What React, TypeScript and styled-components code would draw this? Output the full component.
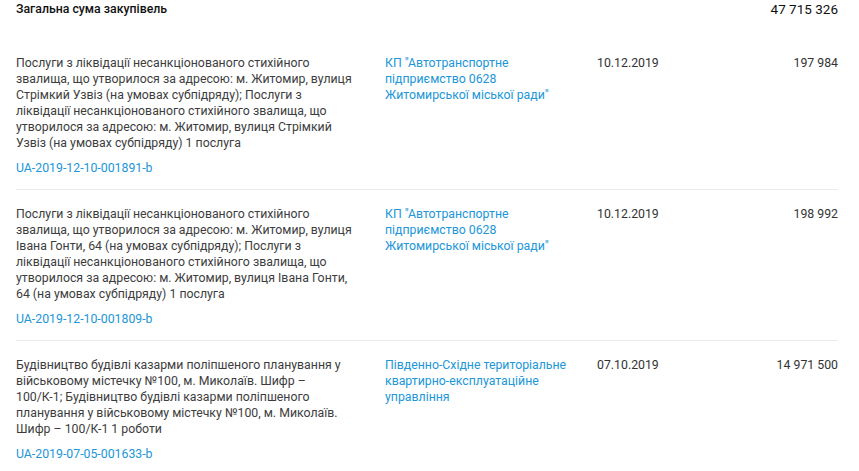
import styled, { createGlobalStyle } from "styled-components";

type Purchase = {
	title: string;
	id: string;
	supplier: string;
	date: string;
	amount: string;
};

// word joiner keeps "100/К-1" together the way the source page wraps it
const cipher = "100/\u2060К-1";

const purchases: Purchase[] = [
	{
		title:
			"Послуги з ліквідації несанкціонованого стихійного звалища, що утворилося за адресою: м. Житомир, вулиця Стрімкий Узвіз (на умовах субпідряду); Послуги з ліквідації несанкціонованого стихійного звалища, що утворилося за адресою: м. Житомир, вулиця Стрімкий Узвіз (на умовах субпідряду) 1 послуга",
		id: "UA-2019-12-10-001891-b",
		supplier: "КП \"Автотранспортне підприємство 0628 Житомирської міської ради\"",
		date: "10.12.2019",
		amount: "197 984",
	},
	{
		title:
			"Послуги з ліквідації несанкціонованого стихійного звалища, що утворилося за адресою: м. Житомир, вулиця Івана Гонти, 64 (на умовах субпідряду); Послуги з ліквідації несанкціонованого стихійного звалища, що утворилося за адресою: м. Житомир, вулиця Івана Гонти, 64 (на умовах субпідряду) 1 послуга",
		id: "UA-2019-12-10-001809-b",
		supplier: "КП \"Автотранспортне підприємство 0628 Житомирської міської ради\"",
		date: "10.12.2019",
		amount: "198 992",
	},
	{
		title: `Будівництво будівлі казарми поліпшеного планування у військовому містечку №100, м. Миколаїв. Шифр – ${cipher}; Будівництво будівлі казарми поліпшеного планування у військовому містечку №100, м. Миколаїв. Шифр – ${cipher} 1 роботи`,
		id: "UA-2019-07-05-001633-b",
		supplier: "Південно-Східне територіальне квартирно-експлуатаційне управління",
		date: "07.10.2019",
		amount: "14 971 500",
	},
];

export default function App() {
	return (
		<>
			<GlobalStyle />
			<StyledPage>
				<StyledSummary>
					<StyledSummaryLabel>Загальна сума закупівель</StyledSummaryLabel>
					<StyledSummaryValue>47 715 326</StyledSummaryValue>
				</StyledSummary>
				<StyledList>
					{purchases.map((purchase) => (
						<StyledRow key={purchase.id}>
							<StyledMain>
								<StyledDescription>{purchase.title}</StyledDescription>
								<StyledLink href="#">{purchase.id}</StyledLink>
							</StyledMain>
							<StyledSupplier href="#">{purchase.supplier}</StyledSupplier>
							<StyledCell>{purchase.date}</StyledCell>
							<StyledAmount>{purchase.amount}</StyledAmount>
						</StyledRow>
					))}
				</StyledList>
			</StyledPage>
		</>
	);
}

const GlobalStyle = createGlobalStyle`
	body {
		margin: 0;
		background: #ffffff;
		font-family: Roboto, "Noto Sans", sans-serif;
		color: #333333;
	}
	* {
		box-sizing: border-box;
	}
`;

const StyledPage = styled.main`
	width: 859px;
	padding: 0 21px 0 16px;
`;
const StyledSummary = styled.header`
	display: flex;
	justify-content: space-between;
	align-items: flex-start;
	height: 39px;
	padding-top: 1px;
`;
const StyledSummaryLabel = styled.h2`
	margin: 0;
	font-size: 12.3px;
	line-height: 16px;
	font-weight: 500;
	color: #111111;
`;
const StyledSummaryValue = styled.span`
	font-size: 13.5px;
	line-height: 16px;
	font-weight: 400;
	color: #111111;
`;
const StyledList = styled.ul`
	list-style: none;
	margin: 0;
	padding: 0;
`;
const StyledRow = styled.li`
	display: grid;
	grid-template-columns: 345px 188px 120px 1fr;
	column-gap: 24px;
	padding: 16px 0 13px;
	border-bottom: 1px solid #ebebeb;
	font-size: 12.3px;
	line-height: 16px;

	&:last-child {
		border: none;
	}
`;
const StyledMain = styled.div`
	padding-right: 6px;
`;
const StyledDescription = styled.p`
	margin: 0 0 9px;
	color: #3d3d3d;
`;
const StyledLink = styled.a`
	color: #2196d9;
	text-decoration: none;
`;
const StyledSupplier = styled.a`
	align-self: start;
	color: #2196d9;
	text-decoration: none;
`;
const StyledCell = styled.span`
	color: #333333;
`;
const StyledAmount = styled.span`
	text-align: right;
	color: #333333;
`;
